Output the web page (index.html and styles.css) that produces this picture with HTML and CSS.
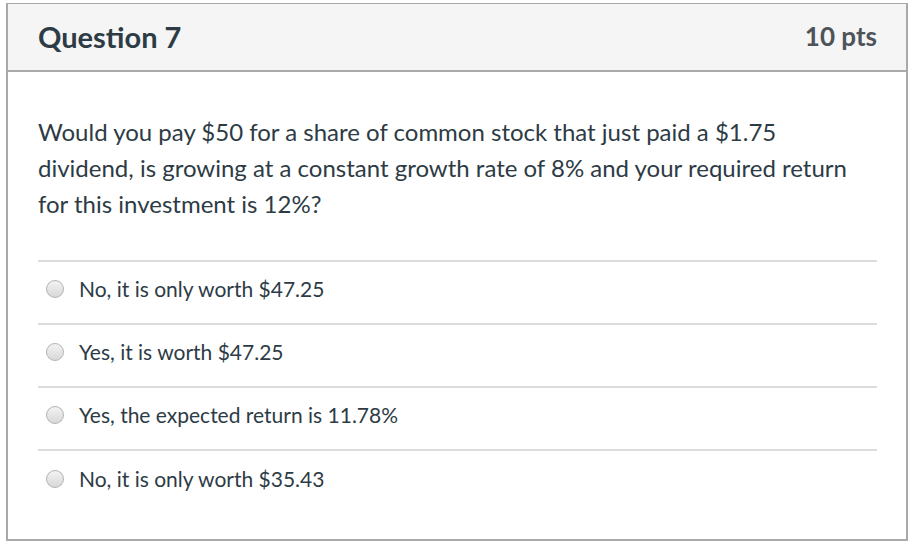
FILE: index.html
```html
<!DOCTYPE html>
<html>
<head>
<meta charset="utf-8">
<link rel="stylesheet" href="styles.css">
</head>
<body>
<div class="question">
  <div class="header">
    <h2 class="title">Question 7</h2>
    <span class="pts">10 pts</span>
  </div>
  <div class="content">
    <p class="text">Would you pay $50 for a share of common stock that just paid a $1.75 dividend, is growing at a constant growth rate of 8% and your required return for this investment is 12%?</p>
    <div class="answers">
      <label class="answer"><span class="radio"></span><span class="label">No, it is only worth $47.25</span></label>
      <label class="answer"><span class="radio"></span><span class="label">Yes, it is worth $47.25</span></label>
      <label class="answer"><span class="radio"></span><span class="label">Yes, the expected return is 11.78%</span></label>
      <label class="answer"><span class="radio"></span><span class="label">No, it is only worth $35.43</span></label>
    </div>
  </div>
</div>
</body>
</html>
```
FILE: styles.css
```css
html, body {
  margin: 0;
  padding: 0;
  background: #fff;
}
body {
  font-family: Lato, "Noto Sans", sans-serif;
  color: #2d3b45;
}
.question {
  box-sizing: border-box;
  margin: 3px 0 0 6px;
  width: 902px;
  height: 538px;
  border: 2px solid #a9a9a9;
  border-top-width: 1px;
}
.header {
  box-sizing: border-box;
  height: 68px;
  background: #f5f5f5;
  border-bottom: 2px solid #a9a9a9;
  display: flex;
  justify-content: space-between;
  align-items: center;
  padding: 0 29px 2px 30px;
}
.title {
  margin: 0;
  font-size: 29px;
  font-weight: 700;
  color: #2d3b45;
}
.pts {
  font-size: 26px;
  font-weight: 700;
  color: #4d5358;
}
.content {
  padding: 42px 29px 0 30px;
}
.text {
  margin: 0;
  max-width: 820px;
  font-size: 24px;
  line-height: 36px;
}
.answers {
  margin-top: 38px;
  border-top: 2px solid #dcdcdc;
}
.answer {
  box-sizing: border-box;
  height: 63px;
  border-bottom: 2px solid #dcdcdc;
  display: flex;
  align-items: center;
  padding: 0 0 8px 8px;
  font-size: 21px;
}
.answer:last-child {
  border-bottom: none;
}
.radio {
  box-sizing: border-box;
  width: 18px;
  height: 18px;
  border-radius: 50%;
  border: 1px solid #b4b4b4;
  background: linear-gradient(#f3f3f3, #d8d8d8);
  margin-right: 15px;
  flex: none;
}
```
